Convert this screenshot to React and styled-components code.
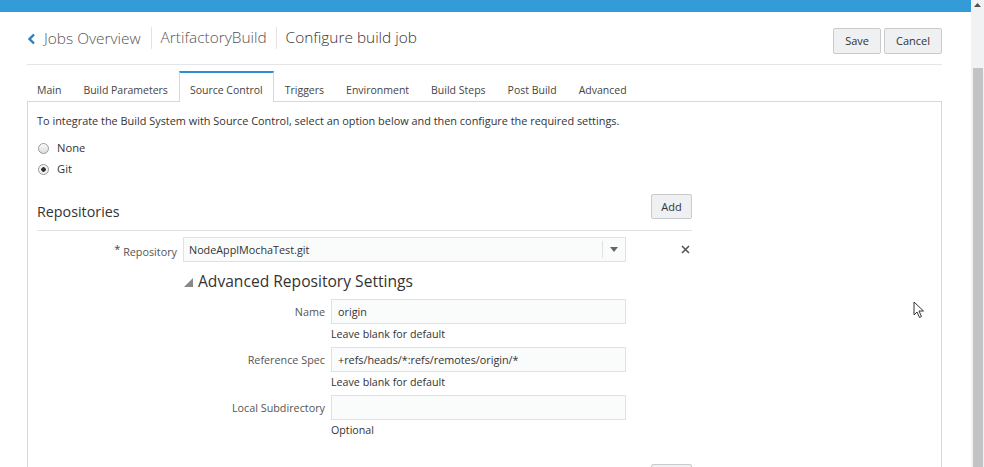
import styled, { createGlobalStyle } from 'styled-components';

const tabs = ['Main', 'Build Parameters', 'Source Control', 'Triggers', 'Environment', 'Build Steps', 'Post Build', 'Advanced'];

const fields = [
    { label: 'Name', value: 'origin', hint: 'Leave blank for default' },
    { label: 'Reference Spec', value: '+refs/heads/*:refs/remotes/origin/*', hint: 'Leave blank for default' },
    { label: 'Local Subdirectory', value: '', hint: 'Optional' },
];

export default function App() {
    return (
        <Screen>
            <GlobalStyle />
            <Main>
                <TopBar />
                <Page>
                    <Header>
                        <Crumbs>
                            <Back>
                                <svg width="9" height="12" viewBox="0 0 9 12">
                                    <path d="M7 1.5 L2.5 6 L7 10.5" fill="none" stroke="#2a7fc1" strokeWidth="2.4" />
                                </svg>
                                Jobs Overview
                            </Back>
                            <Crumb>ArtifactoryBuild</Crumb>
                            <Crumb current>Configure build job</Crumb>
                        </Crumbs>
                        <Actions>
                            <Button>Save</Button>
                            <Button>Cancel</Button>
                        </Actions>
                    </Header>

                    <TabBar>
                        {tabs.map(t => (
                            <Tab key={t} active={t === 'Source Control'}>{t}</Tab>
                        ))}
                    </TabBar>

                    <Panel>
                        <Intro>To integrate the Build System with Source Control, select an option below and then configure the required settings.</Intro>
                        <Radios>
                            <RadioRow><Radio /> None</RadioRow>
                            <RadioRow><Radio checked /> Git</RadioRow>
                        </Radios>

                        <FormArea>
                            <SectionHead>
                                <SectionTitle>Repositories</SectionTitle>
                                <Button small offset>Add</Button>
                            </SectionHead>

                            <RepoRow>
                                <RepoLabel><Star>*</Star> Repository</RepoLabel>
                                <Select>
                                    <SelectValue>NodeApplMochaTest.git</SelectValue>
                                    <SelectArrow>
                                        <svg width="8" height="5" viewBox="0 0 8 5">
                                            <path d="M0 0 H8 L4 5 Z" fill="#666" />
                                        </svg>
                                    </SelectArrow>
                                </Select>
                                <Remove>
                                    <svg width="9" height="9" viewBox="0 0 9 9">
                                        <path d="M1 1 L8 8 M8 1 L1 8" stroke="#555" strokeWidth="1.6" />
                                    </svg>
                                </Remove>
                            </RepoRow>

                            <Advanced>
                                <AdvancedTitle>
                                    <svg width="9" height="9" viewBox="0 0 9 9">
                                        <path d="M9 0 V9 H0 Z" fill="#888" />
                                    </svg>
                                    Advanced Repository Settings
                                </AdvancedTitle>
                            </Advanced>
                            <FieldList>
                                {fields.map(f => (
                                    <Field key={f.label}>
                                        <FieldLabel>{f.label}</FieldLabel>
                                        <FieldBody>
                                            <Input>{f.value}</Input>
                                            <Hint>{f.hint}</Hint>
                                        </FieldBody>
                                    </Field>
                                ))}
                            </FieldList>

                            <Footer>
                                <Button small aria-label="Add" />
                            </Footer>
                        </FormArea>
                    </Panel>
                </Page>
                <Cursor>
                    <svg width="12" height="18" viewBox="0 0 12 18">
                        <path d="M1 1 L1 14 L4 11 L6.5 16.5 L8.5 15.5 L6 10 L10.5 10 Z" fill="#fff" stroke="#333" strokeWidth="1" strokeLinejoin="round" />
                    </svg>
                </Cursor>
            </Main>
            <Scrollbar>
                <ScrollArrow>
                    <svg width="7" height="4" viewBox="0 0 7 4">
                        <path d="M0 4 L3.5 0 L7 4 Z" fill="#505050" />
                    </svg>
                </ScrollArrow>
                <Thumb />
            </Scrollbar>
        </Screen>
    );
}

const GlobalStyle = createGlobalStyle`
    html, body {
        margin: 0;
        padding: 0;
        background: #fff;
        overflow: hidden;
    }
    body {
        font-family: "Open Sans", "Noto Sans", sans-serif;
        color: #333;
    }
`;

const Screen = styled.div`
    display: flex;
    width: 984px;
    height: 467px;
    overflow: hidden;
`;

const Main = styled.div`
    position: relative;
    flex: 1;
    height: 467px;
    overflow: hidden;
`;

const TopBar = styled.div`
    height: 12px;
    background: #339bd7;
`;

const Page = styled.div`
    margin-left: 27px;
    width: 915px;
`;

const Header = styled.div`
    display: flex;
    align-items: center;
    justify-content: space-between;
    height: 52px;
    border-bottom: 1px solid #e3e6e8;
`;

const Crumbs = styled.div`
    display: flex;
    align-items: center;
    font-size: 15.4px;
    font-weight: 300;
    color: #555;
`;

const Back = styled.div`
    display: flex;
    align-items: center;
    gap: 8px;
    padding-right: 10px;
    svg {
        margin-top: 1px;
    }
`;

const Crumb = styled.div`
    padding: 0 9px;
    border-left: 1px solid #e3e3e3;
    line-height: 22px;
    color: ${props => props.current ? '#333' : '#555'};
`;

const Actions = styled.div`
    display: flex;
    gap: 3px;
    margin-top: 5px;
`;

const Button = styled.button`
    font-family: inherit;
    font-size: 11px;
    color: #333;
    box-sizing: border-box;
    min-width: ${props => props.small ? '41px' : '0'};
    height: ${props => props.small ? '25px' : '26px'};
    padding: 0 ${props => props.small ? '8px' : '11px'};
    margin-top: ${props => props.offset ? '6px' : '0'};
    background: #eef0f1;
    border: 1px solid #c9cccf;
    border-radius: 2px;
`;

const TabBar = styled.div`
    display: flex;
    margin-top: 6px;
    height: 30px;
    align-items: stretch;
`;

const Tab = styled.div`
    display: flex;
    align-items: center;
    padding: 5px 10px 0;
    font-size: 10.5px;
    color: #444;
    margin-bottom: ${props => props.active ? '-1px' : '0'};
    background: #fff;
    position: relative;
    border: 1px solid ${props => props.active ? '#d6d9dc' : 'transparent'};
    border-top: 2px solid ${props => props.active ? '#2b8fd3' : 'transparent'};
    border-bottom: none;
    &:first-child {
        padding-left: 9px;
    }
`;

const Panel = styled.div`
    border: 1px solid #d6d9dc;
    border-bottom: none;
    padding: 10px 9px 0;
    height: 400px;
`;

const Intro = styled.div`
    font-size: 10.9px;
    line-height: 18px;
    color: #333;
`;

const Radios = styled.div`
    display: flex;
    flex-direction: column;
    gap: 3px;
    margin-top: 9px;
`;

const RadioRow = styled.label`
    display: flex;
    align-items: center;
    gap: 8px;
    font-size: 11.2px;
    line-height: 18px;
    padding-left: 1px;
`;

const Radio = styled.span`
    width: 9px;
    height: 9px;
    border-radius: 50%;
    border: 1px solid #9a9a9a;
    background: ${props => props.checked
        ? 'radial-gradient(circle, #333 0 2px, #f2f2f2 2.5px)'
        : 'linear-gradient(#fafafa, #dcdcdc)'};
`;

const FormArea = styled.div`
    width: 655px;
`;

const SectionHead = styled.div`
    display: flex;
    align-items: center;
    justify-content: space-between;
    margin-top: 8px;
    padding-bottom: 9px;
    border-bottom: 1px solid #e1e4e6;
`;

const SectionTitle = styled.div`
    font-size: 14.3px;
    color: #333;
    padding-top: 16px;
`;

const RepoRow = styled.div`
    display: grid;
    grid-template-columns: 140px 443px 1fr;
    column-gap: 6px;
    align-items: center;
    margin-top: 6px;
`;

const RepoLabel = styled.div`
    text-align: right;
    font-size: 10.8px;
    color: #555;
`;

const Star = styled.span`
    font-size: 11px;
    vertical-align: 3px;
    color: #444;
`;

const Select = styled.div`
    display: flex;
    height: 25px;
    box-sizing: border-box;
    border: 1px solid #dde2e5;
    background: #fafbfb;
`;

const SelectValue = styled.div`
    flex: 1;
    display: flex;
    align-items: center;
    padding-left: 5px;
    font-size: 10.8px;
    color: #333;
`;

const SelectArrow = styled.div`
    width: 22px;
    display: flex;
    align-items: center;
    justify-content: center;
    border-left: 1px solid #dde2e5;
    margin: 3px 0;
`;

const Remove = styled.div`
    display: flex;
    justify-content: flex-end;
    padding-right: 2px;
`;

const Advanced = styled.div`
    margin-left: 147px;
    margin-top: 8px;
`;

const AdvancedTitle = styled.div`
    display: flex;
    align-items: center;
    gap: 5px;
    font-size: 15.6px;
    color: #333;
    line-height: 22px;
    svg {
        margin-top: 3px;
    }
`;

const FieldList = styled.div`
    display: flex;
    flex-direction: column;
    gap: 5px;
    margin-top: 7px;
`;

const Field = styled.div`
    display: grid;
    grid-template-columns: 288px 295px;
    column-gap: 6px;
`;

const FieldLabel = styled.div`
    text-align: right;
    font-size: 10.8px;
    color: #555;
    line-height: 25px;
`;

const FieldBody = styled.div`
    display: flex;
    flex-direction: column;
`;

const Input = styled.div`
    height: 25px;
    box-sizing: border-box;
    border: 1px solid #dde2e5;
    background: #fafbfb;
    padding-left: 6px;
    font-size: 10.8px;
    line-height: 23px;
    color: #333;
`;

const Hint = styled.div`
    font-size: 10.7px;
    line-height: 16px;
    margin-top: 2px;
    color: #333;
`;

const Footer = styled.div`
    display: flex;
    justify-content: flex-end;
    margin-top: 26px;
`;

const Cursor = styled.div`
    position: absolute;
    left: 913px;
    top: 301px;
    line-height: 0;
`;

const Scrollbar = styled.div`
    width: 13px;
    height: 467px;
    background: #f1f2f3;
    display: flex;
    flex-direction: column;
    align-items: center;
`;

const ScrollArrow = styled.div`
    height: 68px;
    display: flex;
    justify-content: center;
    padding-top: 3px;
    box-sizing: border-box;
`;

const Thumb = styled.div`
    width: 10px;
    flex: 1;
    background: #c1c3c5;
`;
